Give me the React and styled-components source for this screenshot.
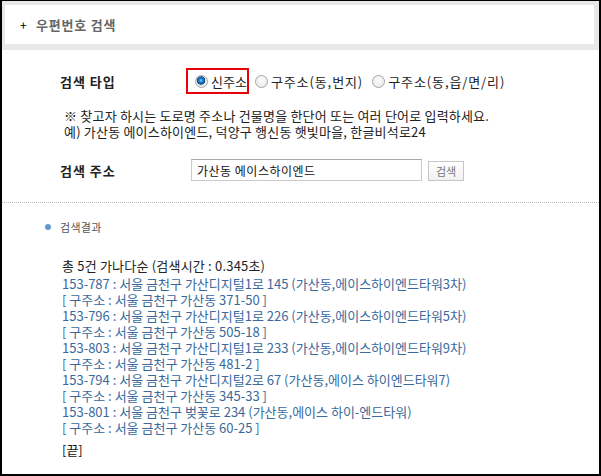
import React from "react";
import styled, { createGlobalStyle } from "styled-components";

const GlobalStyle = createGlobalStyle`
  html, body {
    margin: 0;
    padding: 0;
    background: #fff;
  }
  body {
    font-family: "Noto Sans CJK KR", "Noto Sans", sans-serif;
  }
`;

const results = [
  {
    zip: "153-787",
    road: "서울 금천구 가산디지털1로 145 (가산동,에이스하이엔드타워3차)",
    old: "서울 금천구 가산동 371-50"
  },
  {
    zip: "153-796",
    road: "서울 금천구 가산디지털1로 226 (가산동,에이스하이엔드타워5차)",
    old: "서울 금천구 가산동 505-18"
  },
  {
    zip: "153-803",
    road: "서울 금천구 가산디지털1로 233 (가산동,에이스하이엔드타워9차)",
    old: "서울 금천구 가산동 481-2"
  },
  {
    zip: "153-794",
    road: "서울 금천구 가산디지털2로 67 (가산동,에이스 하이엔드타워7)",
    old: "서울 금천구 가산동 345-33"
  },
  {
    zip: "153-801",
    road: "서울 금천구 벚꽃로 234 (가산동,에이스 하이-엔드타워)",
    old: "서울 금천구 가산동 60-25"
  }
];

const radios = [
  { label: "신주소", checked: true },
  { label: "구주소(동,번지)" },
  { label: "구주소(동,읍/면/리)" }
];

export default function App() {
  return (
    <>
      <GlobalStyle />
      <Frame>
        <HeaderWrap>
          <HeaderBox>
            <Plus>+</Plus>
            우편번호 검색
          </HeaderBox>
        </HeaderWrap>

        <Form>
          <Row>
            <Label>검색 타입</Label>
            <RadioGroup>
              {radios.map((r, index) => (
                <RadioItem key={index} $selected={r.checked}>
                  <RadioDot $checked={r.checked} />
                  {r.label}
                </RadioItem>
              ))}
            </RadioGroup>
          </Row>
          <Note>
            ※ 찾고자 하시는 도로명 주소나 건물명을 한단어 또는 여러 단어로 입력하세요.
            <br />
            예) 가산동 에이스하이엔드, 덕양구 행신동 햇빛마을, 한글비석로24
          </Note>
          <Row $second>
            <Label>검색 주소</Label>
            <SearchInput defaultValue="가산동 에이스하이엔드" />
            <SearchButton>검색</SearchButton>
          </Row>
        </Form>

        <Divider />

        <Result>
          <ResultTitle>검색결과</ResultTitle>
          <Summary>총 5건 가나다순 (검색시간 : 0.345초)</Summary>
          <List>
            {results.map((item, index) => (
              <React.Fragment key={index}>
                <Line>
                  {item.zip} : {item.road}
                </Line>
                <Line>[ 구주소 : {item.old} ]</Line>
              </React.Fragment>
            ))}
          </List>
          <End>[끝]</End>
        </Result>
      </Frame>
    </>
  );
}

const Frame = styled.div`
  box-sizing: border-box;
  height: 476px;
  border-style: solid;
  border-color: #000;
  border-width: 1px 2px 2px 2px;
  background: #fff;
  overflow: hidden;
`;

const HeaderWrap = styled.div`
  background: #e8e8e8;
  padding: 4px 5px 6px 3px;
`;

const HeaderBox = styled.div`
  height: 39px;
  background: #fff;
  display: flex;
  align-items: center;
  padding-left: 15px;
  font-size: 13px;
  font-weight: bold;
  color: #666;
  letter-spacing: 0.8px;
`;

const Plus = styled.span`
  color: #000;
  font-weight: normal;
  font-size: 12px;
  width: 16px;
`;

const Form = styled.div`
  padding: 18px 0 0 58px;
`;

const Row = styled.div`
  display: flex;
  align-items: center;
  height: ${(p) => (p.$second ? "22px" : "26px")};
  margin-top: ${(p) => (p.$second ? "19px" : "0")};
`;

const Label = styled.div`
  width: 126px;
  flex: none;
  font-size: 13px;
  font-weight: bold;
  color: #222;
  letter-spacing: 1px;
`;

const RadioGroup = styled.div`
  display: flex;
  align-items: center;
  height: 26px;
`;

const RadioItem = styled.label`
  box-sizing: border-box;
  flex: none;
  height: 26px;
  display: flex;
  align-items: center;
  gap: 3px;
  white-space: nowrap;
  font-size: 13px;
  color: #222;
  letter-spacing: ${(p) => (p.$selected ? "0" : "0.9px")};
  padding: ${(p) => (p.$selected ? "0 0 0 7px" : "0 3px 0 6px")};
  border: ${(p) => (p.$selected ? "2px solid #e8000b" : "none")};
`;

const RadioDot = styled.span`
  flex: none;
  width: 13px;
  height: 13px;
  border-radius: 50%;
  box-sizing: border-box;
  border: 1px solid #a4a4a4;
  background: ${(p) =>
    p.$checked
      ? "radial-gradient(circle at 45% 40%, #8fd0ff 0, #1f7cc8 2px, #0c4f92 4px, #e6e6e6 4.6px, #f6f6f6 100%)"
      : "radial-gradient(circle at 50% 40%, #fbfbfb 0, #e4e4e4 100%)"};
  box-shadow: inset 0 0 1px #fff;
`;

const Note = styled.p`
  margin: 14px 0 0 4px;
  font-size: 13px;
  line-height: 16px;
  color: #222;
  letter-spacing: 0.2px;
`;

const SearchInput = styled.input`
  box-sizing: border-box;
  width: 231px;
  height: 22px;
  margin-left: 5px;
  padding: 0 5px;
  border: 1px solid #c9c9c9;
  border-top-color: #a9a9a9;
  font-family: "Noto Sans CJK KR", sans-serif;
  font-size: 12px;
  letter-spacing: 0.5px;
  color: #111;
  outline: none;
`;

const SearchButton = styled.button`
  box-sizing: border-box;
  width: 36px;
  height: 20px;
  margin: 2px 0 0 6px;
  padding: 0;
  border: 1px solid #c6c6c6;
  background: linear-gradient(#ffffff, #f1f1f1);
  font-family: "Noto Sans CJK KR", sans-serif;
  font-size: 11px;
  color: #777;
`;

const Divider = styled.div`
  margin-top: 21px;
  height: 0;
  border-top: 1px dotted #bcbcbc;
`;

const Result = styled.div`
  padding: 16px 0 0 60px;
`;

const ResultTitle = styled.div`
  position: relative;
  margin-left: -2px;
  font-size: 11px;
  line-height: 16px;
  letter-spacing: 0.3px;
  color: #555;

  &::before {
    content: "";
    position: absolute;
    left: -15px;
    top: 5px;
    width: 6px;
    height: 6px;
    border-radius: 50%;
    background: #6497cb;
  }
`;

const Summary = styled.div`
  margin-top: 23px;
  font-size: 13px;
  line-height: 16px;
  letter-spacing: 0.2px;
  color: #222;
`;

const List = styled.div`
  margin-top: 2px;
`;

const Line = styled.div`
  font-size: 13px;
  line-height: 16px;
  color: #3a6a9c;
  white-space: nowrap;
`;

const End = styled.div`
  margin-top: 6px;
  font-size: 13px;
  line-height: 16px;
  color: #111;
`;
